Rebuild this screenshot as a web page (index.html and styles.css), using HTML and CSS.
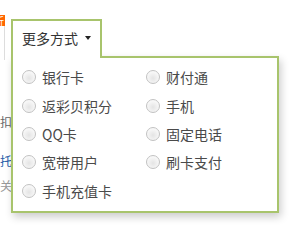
FILE: index.html
```html
<!DOCTYPE html>
<html>
  <head>
    <meta name="viewport" content="width=device-width, initial-scale=1.0">
    <link rel="stylesheet" href="styles.css">
  </head>
  <body>
    <div class="side">
      <div class="side-badge"><span>折</span></div>
      <div class="side-box"></div>
      <div class="side-text side-gray"><span>优惠折扣</span></div>
      <div class="side-text side-blue"><span>委托</span></div>
      <div class="side-text side-light"><span>相关</span></div>
    </div>

    <div class="pay-more">
      <div class="pay-tab">更多方式<i class="caret"></i></div>
      <ul class="pay-list">
        <li><span class="radio"></span>银行卡</li>
        <li><span class="radio"></span>财付通</li>
        <li><span class="radio"></span>返彩贝积分</li>
        <li><span class="radio"></span>手机</li>
        <li><span class="radio"></span>QQ卡</li>
        <li><span class="radio"></span>固定电话</li>
        <li><span class="radio"></span>宽带用户</li>
        <li><span class="radio"></span>刷卡支付</li>
        <li><span class="radio"></span>手机充值卡</li>
      </ul>
    </div>
  </body>
</html>
```

FILE: styles.css
```css
body {
  margin: 0;
  width: 297px;
  height: 225px;
  overflow: hidden;
  position: relative;
  background: #fff;
  font-family: "Noto Sans CJK SC", "Noto Sans", sans-serif;
}
.side {
  padding-top: 15px;
}
.side-badge {
  width: 5px;
  height: 11px;
  overflow: hidden;
  background: #f60;
  color: #fff;
  font-size: 10px;
  line-height: 11px;
}
.side-badge span {
  display: block;
  margin-left: -6px;
}
.side-box {
  width: 4px;
  height: 34px;
  border-right: 1px solid #ddd;
}
.side-text {
  display: flex;
  justify-content: flex-end;
  width: 12px;
  overflow: hidden;
  white-space: nowrap;
  font-size: 12px;
  line-height: 16px;
}
.side-gray {
  margin-top: 54px;
  color: #666;
}
.side-blue {
  margin-top: 23px;
  color: #1f5ca8;
}
.side-light {
  margin-top: 9px;
  color: #999;
}
.pay-more {
  position: absolute;
  left: 11px;
  top: 19px;
}
.pay-tab {
  position: relative;
  z-index: 2;
  display: flex;
  align-items: center;
  width: 78px;
  height: 34px;
  padding: 0 0 3px 9px;
  margin-bottom: -2px;
  border: 2px solid #a8c46c;
  border-bottom: 0;
  background: #fff;
  font-size: 14px;
  color: #333;
}
.caret {
  width: 0;
  height: 0;
  margin-left: 7px;
  border-left: 3.5px solid transparent;
  border-right: 3.5px solid transparent;
  border-top: 4px solid #222;
}
.pay-list {
  display: grid;
  grid-template-columns: 124px 124px;
  grid-auto-rows: 28.4px;
  align-content: start;
  width: 255px;
  height: 148px;
  margin: 0;
  padding: 5px 0 0 9px;
  list-style: none;
  border: 2px solid #a8c46c;
  background: #fff;
  box-shadow: 2px 4px 8px rgba(0, 0, 0, 0.2);
}
.pay-list li {
  display: flex;
  align-items: center;
  white-space: nowrap;
  font-size: 14px;
  color: #4a4a4a;
}
.radio {
  flex: none;
  width: 14px;
  height: 14px;
  margin-right: 6px;
  box-sizing: border-box;
  border: 1px solid #c2c2c2;
  border-radius: 50%;
  background: radial-gradient(circle at 50% 60%, #e4e4e4, #f6f6f6 60%, #fdfdfd);
}
```
